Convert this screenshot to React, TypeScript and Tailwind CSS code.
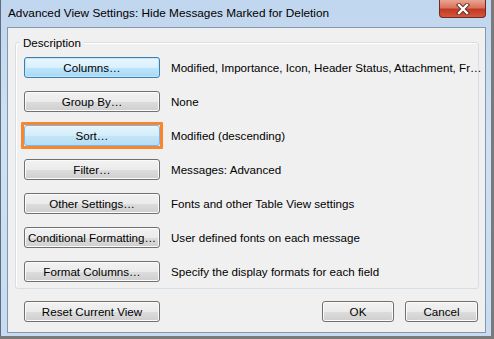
const rows = [
  { label: "Columns...", desc: "Modified, Importance, Icon, Header Status, Attachment, Fr...", kind: "blue" },
  { label: "Group By...", desc: "None", kind: "normal" },
  { label: "Sort...", desc: "Modified (descending)", kind: "focus" },
  { label: "Filter...", desc: "Messages: Advanced", kind: "normal" },
  { label: "Other Settings...", desc: "Fonts and other Table View settings", kind: "normal" },
  { label: "Conditional Formatting...", desc: "User defined fonts on each message", kind: "normal" },
  { label: "Format Columns...", desc: "Specify the display formats for each field", kind: "normal" },
]

function WinButton({ label, kind = "normal", className = "" }: { label: string; kind?: string; className?: string }) {
  const base =
    "h-[21px] shrink-0 flex items-center justify-center whitespace-nowrap rounded-[3px] border text-black leading-none " + className
  const text = label.replace("...", "…")
  if (kind === "blue")
    return (
      <div className={base + " border-[#3c7fb1] bg-[linear-gradient(#eaf6fd_0%,#d9f0fc_50%,#bee6fd_51%,#a7d9f5_100%)] shadow-[inset_0_0_0_1px_#c6e6f7]"}>
        {text}
      </div>
    )
  if (kind === "focus")
    return (
      <div className="shrink-0 rounded-[1px] border-[3px] border-[#f7862c] -m-[3px]">
        <div className={base + " border-[#7eb4ea] bg-[linear-gradient(#e5f4fc_0%,#d3edfb_50%,#c4e5f6_51%,#b6def5_100%)]"}>
          {text}
        </div>
      </div>
    )
  return (
    <div className={base + " border-[#707070] bg-[linear-gradient(#f2f2f2_0%,#ebebeb_50%,#dddddd_51%,#cfcfcf_100%)] shadow-[inset_0_0_0_1px_#fbfbfb]"}>
      {text}
    </div>
  )
}

export default function App() {
  return (
    <div className="w-[494px] h-[339px] bg-[#7a7a7a] font-['Liberation_Sans',Arial,sans-serif] text-[11.6px] text-black overflow-hidden">
      <div className="w-[491px] h-[336px] border-l border-[#5d6d80] bg-[linear-gradient(180deg,#c0d6ee_0%,#cfe1f4_40%,#c7dcf3_100%)] flex flex-col">
        <div className="h-[27px] flex justify-between">
          <span className="self-center pl-[7px] pt-[1px] text-[11.8px]">
            Advanced View Settings: Hide Messages Marked for Deletion
          </span>
          <div className="mr-[5px] w-[47px] h-[18px] rounded-b-[4px] border border-t-0 border-[#6e2b22] bg-[linear-gradient(#eba592_0%,#d9735d_45%,#c23a22_55%,#d4573e_100%)] flex items-center justify-center">
            <svg width="14" height="12" viewBox="0 0 14 12">
              <path d="M3 2 L11 10 M11 2 L3 10" stroke="#5a2a24" strokeWidth="4.2" strokeLinecap="square" />
              <path d="M3 2 L11 10 M11 2 L3 10" stroke="#ffffff" strokeWidth="2.4" strokeLinecap="square" />
            </svg>
          </div>
        </div>
        <div className="ml-[6px] w-[479px] h-[306px] border border-[#8497ad] bg-[#f0f0f0] flex flex-col">
          <div className="relative shrink-0 mt-[14px] ml-[7px] w-[464px] h-[247px] border border-[#d5dfe5] rounded-[3px] shadow-[inset_1px_1px_0_#ffffff] flex flex-col gap-[13px] pt-[14px] pl-[8px]">
            <span className="absolute -top-[9px] left-[4px] px-[3px] bg-[#f0f0f0]">Description</span>
            {rows.map((r) => (
              <div key={r.label} className="h-[21px] shrink-0 flex items-center gap-[11px]">
                <WinButton label={r.label} kind={r.kind} className="w-[136px]" />
                <span className="whitespace-nowrap">{r.desc.replace("...", "…")}</span>
              </div>
            ))}
          </div>
          <div className="flex mt-[12px] pl-[16px] pr-[7px]">
            <WinButton label="Reset Current View" className="w-[136px]" />
            <div className="ml-auto flex gap-[11px]">
              <WinButton label="OK" className="w-[72px]" />
              <WinButton label="Cancel" className="w-[73px]" />
            </div>
          </div>
        </div>
      </div>
    </div>
  )
}
